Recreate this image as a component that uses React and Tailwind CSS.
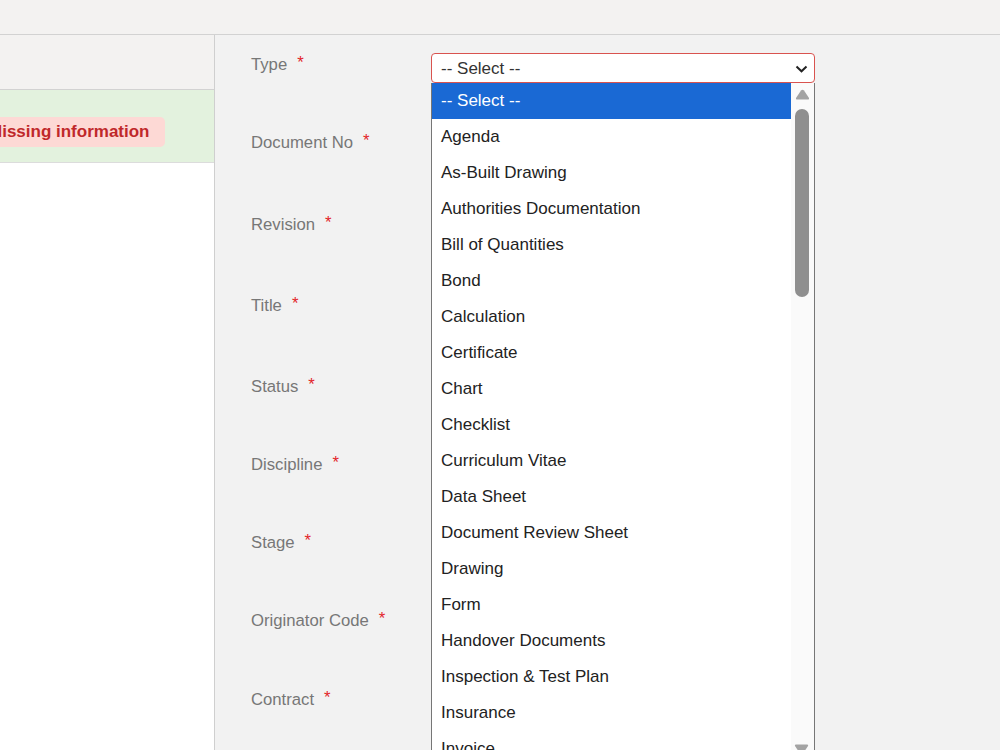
import React from "react";

const labels = [
  ["Type", 78],
  ["Document No", 82],
  ["Revision", 81],
  ["Title", 81],
  ["Status", 78],
  ["Discipline", 78],
  ["Stage", 78],
  ["Originator Code", 79],
  ["Contract", 80],
];

const options = [
  "-- Select --",
  "Agenda",
  "As-Built Drawing",
  "Authorities Documentation",
  "Bill of Quantities",
  "Bond",
  "Calculation",
  "Certificate",
  "Chart",
  "Checklist",
  "Curriculum Vitae",
  "Data Sheet",
  "Document Review Sheet",
  "Drawing",
  "Form",
  "Handover Documents",
  "Inspection & Test Plan",
  "Insurance",
  "Invoice",
];

export default function App() {
  return (
    <div
      className="h-[750px] w-[1000px] overflow-hidden bg-[#f2f2f2] flex flex-col text-[17px]"
      style={{ fontFamily: '"Liberation Sans", Arial, sans-serif' }}
    >
      <div className="h-[35px] shrink-0 bg-[#f3f2f1] border-b border-[#d2d2d2]" />
      <div className="flex flex-1 min-h-0">
        {/* Left panel */}
        <div className="w-[215px] shrink-0 border-r border-[#cfcfcf] bg-white flex flex-col overflow-hidden">
          <div className="h-[55px] shrink-0 bg-[#f3f2f1] border-b border-[#d2d2d2]" />
          <div className="h-[73px] shrink-0 bg-[#e3f2de] border-b border-[#dcdcdc] flex items-start pt-[27px]">
            <div className="ml-[-28px] h-[30px] pl-[16px] pr-[15px] rounded-[5px] bg-[#fdd9d5] text-[#c0282a] font-bold flex items-center whitespace-nowrap shrink-0">
              Missing information
            </div>
          </div>
          <div className="flex-1 bg-white" />
        </div>

        {/* Right panel */}
        <div className="relative flex-1 bg-[#f2f2f2] pl-[36px] flex items-start">
          <div className="w-[180px] shrink-0 pt-[20px] flex flex-col text-[16.7px]">
            {labels.map(([l, h]) => (
              <div key={l} className="shrink-0 leading-[20px] text-[#777777] whitespace-nowrap" style={{ height: h }}>
                {l}
                <span className="ml-[10px] text-[#e3262b] relative top-[-2px]">*</span>
              </div>
            ))}
          </div>
          <div className="w-[384px] shrink-0 pt-[18px] relative">
            <div className="h-[30px] border border-[#d9534f] rounded-[4px] bg-white flex items-center justify-between pl-[9px] pr-[6px] text-[#333333]">
              <span className="pt-[2px]">-- Select --</span>
              <svg width="13" height="8" viewBox="0 0 13 8" className="mt-[1px]">
                <polyline points="1.5,1.5 6.5,6.3 11.5,1.5" fill="none" stroke="#222" strokeWidth="2" />
              </svg>
            </div>
            {/* Dropdown list */}
            <div className="absolute left-0 top-[48px] w-[384px] h-[684px] bg-white border-l border-r border-[#767676] flex">
              <div className="w-[359px] flex flex-col">
                {options.map((o, i) => (
                  <div
                    key={o}
                    className={
                      "h-[36px] shrink-0 leading-[36px] pl-[9px] whitespace-nowrap " +
                      (i === 0 ? "bg-[#1a69d4] text-white" : "text-[#222222]")
                    }
                  >
                    {o}
                  </div>
                ))}
              </div>
              <div className="w-[23px] bg-[#fafafa] flex flex-col items-center relative">
                <svg width="15" height="11" viewBox="0 0 15 11" className="mt-[6px] ml-[-1px]">
                  <path d="M6 1.5 Q7.5 0 9 1.5 L14 9 Q14.5 10.5 13 10.5 L2 10.5 Q0.5 10.5 1 9 Z" fill="#a3a3a3" />
                </svg>
                <div className="mt-[9px] ml-[-1px] w-[14px] h-[188px] rounded-full bg-[#8f8f8f]" />
                <svg width="15" height="11" viewBox="0 0 15 11" className="absolute left-[3px] top-[661px]">
                  <path d="M6 9.5 Q7.5 11 9 9.5 L14 2 Q14.5 0.5 13 0.5 L2 0.5 Q0.5 0.5 1 2 Z" fill="#a3a3a3" />
                </svg>
              </div>
            </div>
          </div>
        </div>
      </div>
    </div>
  );
}
